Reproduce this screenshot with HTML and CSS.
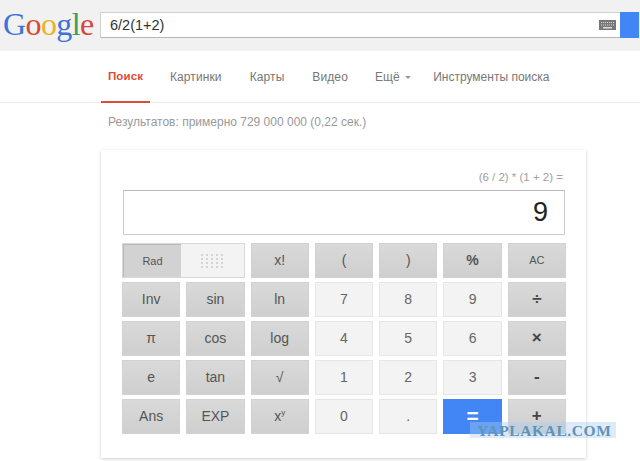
FILE: index.html
```html
<!DOCTYPE html>
<html lang="ru">
<head>
    <meta charset="UTF-8">
    <title>6/2(1+2) - Google</title>
    <link rel="stylesheet" href="styles.css">
</head>
<body>

<!-- Шапка с поиском -->
<header class="top-bar">
    <div class="logo"><span class="blue">G</span><span class="red">o</span><span class="yellow">o</span><span class="blue">g</span><span class="green">l</span><span class="red">e</span></div>
    <div class="search-box">
        <span class="query">6/2(1+2)</span>
        <svg class="keyboard" width="17" height="10" viewBox="0 0 17 10">
            <rect width="17" height="10" fill="#777"/>
            <path d="M2 2.5h13M2 5h13" stroke="#ddd" stroke-width="1" stroke-dasharray="1 1"/>
            <rect x="4" y="7" width="9" height="1.5" fill="#ddd"/>
        </svg>
        <div class="search-button"></div>
    </div>
</header>

<!-- Вкладки -->
<nav class="tabs">
    <a class="tab active">Поиск</a>
    <a class="tab">Картинки</a>
    <a class="tab">Карты</a>
    <a class="tab tab-video">Видео</a>
    <a class="tab tab-more">Ещё <i class="caret"></i></a>
    <a class="tab tab-tools">Инструменты поиска</a>
</nav>

<p class="stats">Результатов: примерно 729 000 000 (0,22 сек.)</p>

<!-- Калькулятор -->
<section class="calc">
    <div class="expression">(6 / 2) * (1 + 2) =</div>
    <div class="display">9</div>
    <div class="keys">
        <div class="toggle">
            <div class="toggle-on">Rad</div>
            <div class="toggle-off">
                <svg width="24" height="14" viewBox="0 0 24 14">
                    <path d="M1 1h22M1 5h22M1 9h22M1 13h22" stroke="#ccc" stroke-width="1.5" stroke-dasharray="2 3"/>
                </svg>
            </div>
        </div>
        <button class="key dark">x!</button>
        <button class="key dark">(</button>
        <button class="key dark">)</button>
        <button class="key dark bold">%</button>
        <button class="key dark small">AC</button>

        <button class="key dark">Inv</button>
        <button class="key dark">sin</button>
        <button class="key dark">ln</button>
        <button class="key">7</button>
        <button class="key">8</button>
        <button class="key">9</button>
        <button class="key dark op">÷</button>

        <button class="key dark">π</button>
        <button class="key dark">cos</button>
        <button class="key dark">log</button>
        <button class="key">4</button>
        <button class="key">5</button>
        <button class="key">6</button>
        <button class="key dark op">×</button>

        <button class="key dark">e</button>
        <button class="key dark">tan</button>
        <button class="key dark">√</button>
        <button class="key">1</button>
        <button class="key">2</button>
        <button class="key">3</button>
        <button class="key dark op">-</button>

        <button class="key dark">Ans</button>
        <button class="key dark">EXP</button>
        <button class="key dark">x<sup>y</sup></button>
        <button class="key">0</button>
        <button class="key">.</button>
        <button class="key blue-key">=</button>
        <button class="key dark op">+</button>
    </div>
</section>

<!-- Водяной знак -->
<div class="watermark">YAPLAKAL.COM</div>

</body>
</html>
```

FILE: styles.css
```css
/* Общие стили */
html, body {
    height: 461px;
    overflow: hidden;
}

body {
    margin: 0;
    position: relative;
    font-family: 'Liberation Sans', Arial, sans-serif;
    background: #fff;
    color: #777;
}

/* Шапка */
.top-bar {
    height: 51px;
    background: #f1f1f1;
    display: flex;
    align-items: center;
    box-sizing: border-box;
    padding: 0 1px 1px 3px;
}

.logo {
    width: 97px;
    font-family: 'Liberation Serif', serif;
    font-size: 32px;
    letter-spacing: -0.6px;
    line-height: 38px;
    margin-top: -3px;
}

.blue { color: #3f72d8; }
.red { color: #d9473a; }
.yellow { color: #e8b320; }
.green { color: #3f9e55; }

.search-box {
    flex: 1;
    height: 26px;
    box-sizing: border-box;
    display: flex;
    align-items: center;
    background: #fff;
    border: 1px solid #d0d0d0;
    border-bottom-color: #b5b5b5;
    border-right: none;
    padding-left: 9px;
}

.query {
    flex: 1;
    font-size: 14.5px;
    color: #333;
}

.keyboard {
    margin-right: 4px;
}

.search-button {
    width: 19px;
    height: 26px;
    background: #4285f4;
}

/* Вкладки */
.tabs {
    height: 52px;
    box-sizing: border-box;
    border-bottom: 1px solid #ebebeb;
    display: flex;
    padding-left: 101px;
}

.tab {
    font-size: 12px;
    color: #777;
    padding: 19px 0 0;
    margin-right: 28px;
    letter-spacing: 0.1px;
}

.tab.active {
    box-sizing: border-box;
    width: 49px;
    height: 52px;
    text-align: center;
    font-size: 11.5px;
    font-weight: bold;
    color: #dd4b39;
    border-bottom: 2px solid #dd4b39;
    margin-right: 20px;
    padding-top: 19px;
}

.tab-video {
    margin-right: 27px;
}

.tab-more {
    margin-right: 22px;
}

.tab-tools {
    letter-spacing: 0;
}

.caret {
    display: inline-block;
    vertical-align: middle;
    margin-left: 2px;
    border: 3px solid transparent;
    border-top: 3px solid #999;
    border-bottom: 0;
}

.stats {
    margin: 12px 0 0 108px;
    height: 14px;
    font-size: 12px;
    line-height: 14px;
    color: #999;
}

/* Карточка калькулятора */
.calc {
    width: 485px;
    height: 308px;
    box-sizing: border-box;
    margin: 21px 0 0 101px;
    padding: 20px 21px 0 21px;
    background: #fff;
    box-shadow: 0 1px 3px rgba(0, 0, 0, 0.2);
}

.expression {
    height: 20px;
    padding-right: 2px;
    text-align: right;
    font-size: 11.5px;
    line-height: 15px;
    color: #a0a0a0;
}

.display {
    height: 45px;
    box-sizing: border-box;
    margin: 0 0 8px 1px;
    border: 1px solid #ccc;
    border-top-color: #b8b8b8;
    padding-right: 16px;
    text-align: right;
    font-size: 27px;
    line-height: 43px;
    color: #222;
}

.keys {
    display: grid;
    grid-template-columns: repeat(7, 58.29px);
    grid-auto-rows: 35px;
    gap: 4px 6px;
}

.key {
    margin: 0;
    padding: 0 0 2px;
    font-family: inherit;
    font-size: 14px;
    color: #666;
    background: #f3f3f3;
    border: 1px solid #e6e6e6;
}

.key.dark {
    background: linear-gradient(#d9d9d9, #cfcfcf);
    border-color: #d2d2d2;
    color: #555;
}

.key.bold {
    font-weight: bold;
}

.key.small {
    font-size: 11px;
}

.key.op {
    font-size: 17px;
    font-weight: bold;
    color: #444;
}

.key.blue-key {
    background: #4285f4;
    border-color: #4285f4;
    color: #fff;
    font-size: 21px;
    font-weight: bold;
}

.key sup {
    font-size: 8px;
    line-height: 0;
}

/* Переключатель Rad / Deg */
.toggle {
    grid-column: span 2;
    display: flex;
    box-sizing: border-box;
    border: 1px solid #d8d8d8;
    font-size: 11px;
}

.toggle-on {
    width: 58px;
    box-sizing: border-box;
    display: flex;
    align-items: center;
    justify-content: center;
    background: #d2d2d2;
    color: #555;
    border-top: 1px solid #b9b9b9;
    border-left: 1px solid #b9b9b9;
}

.toggle-off {
    flex: 1;
    display: flex;
    align-items: center;
    justify-content: center;
    background: #f3f3f3;
}

/* Водяной знак */
.watermark {
    position: absolute;
    left: 470px;
    top: 422px;
    width: 146px;
    height: 16px;
    padding-left: 7px;
    box-sizing: border-box;
    background: rgba(170, 205, 240, 0.4);
    font-family: 'Liberation Serif', serif;
    font-weight: bold;
    font-size: 15.5px;
    line-height: 17px;
    letter-spacing: 0.6px;
    white-space: nowrap;
    color: #5f93b8;
}
```
